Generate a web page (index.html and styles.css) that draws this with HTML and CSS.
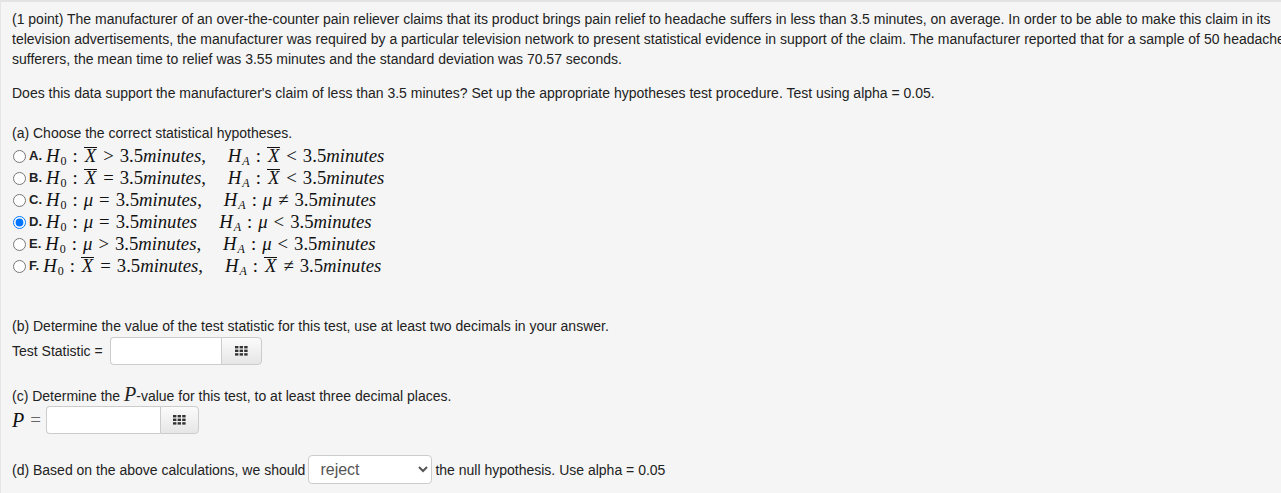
FILE: index.html
```html
<!DOCTYPE html>
<html>
<head>
<meta charset="utf-8">
<link rel="stylesheet" href="styles.css">
</head>
<body>
<div class="problem">
  <p class="intro">(1 point) The manufacturer of an over-the-counter pain reliever claims that its product brings pain relief to headache suffers in less than 3.5 minutes, on average. In order to be able to make this claim in its television advertisements, the manufacturer was required by a particular television network to present statistical evidence in support of the claim. The manufacturer reported that for a sample of 50 headache sufferers, the mean time to relief was 3.55 minutes and the standard deviation was 70.57 seconds.</p>
  <p class="question">Does this data support the manufacturer's claim of less than 3.5 minutes? Set up the appropriate hypotheses test procedure. Test using alpha = 0.05.</p>

  <p class="part-a">(a) Choose the correct statistical hypotheses.</p>
  <div class="choices">
    <label class="choice"><input type="radio" name="h"><b class="letter">A.</b> <span class="math"><i>H</i><sub>0</sub><span class="op">:</span><i class="bar">X</i><span class="op">&gt;</span>3.5<i>minutes</i>,<span class="quad"></span><i>H</i><sub><i>A</i></sub><span class="op">:</span><i class="bar">X</i><span class="op">&lt;</span>3.5<i>minutes</i></span></label>
    <label class="choice"><input type="radio" name="h"><b class="letter">B.</b> <span class="math"><i>H</i><sub>0</sub><span class="op">:</span><i class="bar">X</i><span class="op">=</span>3.5<i>minutes</i>,<span class="quad"></span><i>H</i><sub><i>A</i></sub><span class="op">:</span><i class="bar">X</i><span class="op">&lt;</span>3.5<i>minutes</i></span></label>
    <label class="choice"><input type="radio" name="h"><b class="letter">C.</b> <span class="math"><i>H</i><sub>0</sub><span class="op">:</span><i>μ</i><span class="op">=</span>3.5<i>minutes</i>,<span class="quad"></span><i>H</i><sub><i>A</i></sub><span class="op">:</span><i>μ</i><span class="op">≠</span>3.5<i>minutes</i></span></label>
    <label class="choice"><input type="radio" name="h" checked><b class="letter">D.</b> <span class="math"><i>H</i><sub>0</sub><span class="op">:</span><i>μ</i><span class="op">=</span>3.5<i>minutes</i><span class="quad"></span><i>H</i><sub><i>A</i></sub><span class="op">:</span><i>μ</i><span class="op">&lt;</span>3.5<i>minutes</i></span></label>
    <label class="choice"><input type="radio" name="h"><b class="letter">E.</b> <span class="math"><i>H</i><sub>0</sub><span class="op">:</span><i>μ</i><span class="op">&gt;</span>3.5<i>minutes</i>,<span class="quad"></span><i>H</i><sub><i>A</i></sub><span class="op">:</span><i>μ</i><span class="op">&lt;</span>3.5<i>minutes</i></span></label>
    <label class="choice"><input type="radio" name="h"><b class="letter">F.</b> <span class="math"><i>H</i><sub>0</sub><span class="op">:</span><i class="bar">X</i><span class="op">=</span>3.5<i>minutes</i>,<span class="quad"></span><i>H</i><sub><i>A</i></sub><span class="op">:</span><i class="bar">X</i><span class="op">≠</span>3.5<i>minutes</i></span></label>
  </div>

  <p class="part-b">(b) Determine the value of the test statistic for this test, use at least two decimals in your answer.</p>
  <div class="answer-row">
    <span class="label">Test Statistic =</span>
    <div class="input-group stat">
      <input type="text" class="ans">
      <span class="kbd-btn"><svg width="13" height="10" viewBox="0 0 13 10"><g fill="#333"><rect x="0" y="0" width="3.4" height="2.4"/><rect x="4.6" y="0" width="3.4" height="2.4"/><rect x="9.2" y="0" width="3.4" height="2.4"/><rect x="0" y="3.6" width="3.4" height="2.4"/><rect x="4.6" y="3.6" width="3.4" height="2.4"/><rect x="9.2" y="3.6" width="3.4" height="2.4"/><rect x="0" y="7.2" width="3.4" height="2.4"/><rect x="4.6" y="7.2" width="3.4" height="2.4"/><rect x="9.2" y="7.2" width="3.4" height="2.4"/></g></svg></span>
    </div>
  </div>

  <p class="part-c">(c) Determine the <i class="mathP">P</i>-value for this test, to at least three decimal places.</p>
  <div class="answer-row p-row">
    <span class="math plabel"><i class="pbig">P</i><span class="eq">=</span></span>
    <div class="input-group pval">
      <input type="text" class="ans">
      <span class="kbd-btn"><svg width="13" height="10" viewBox="0 0 13 10"><g fill="#333"><rect x="0" y="0" width="3.4" height="2.4"/><rect x="4.6" y="0" width="3.4" height="2.4"/><rect x="9.2" y="0" width="3.4" height="2.4"/><rect x="0" y="3.6" width="3.4" height="2.4"/><rect x="4.6" y="3.6" width="3.4" height="2.4"/><rect x="9.2" y="3.6" width="3.4" height="2.4"/><rect x="0" y="7.2" width="3.4" height="2.4"/><rect x="4.6" y="7.2" width="3.4" height="2.4"/><rect x="9.2" y="7.2" width="3.4" height="2.4"/></g></svg></span>
    </div>
  </div>

  <div class="answer-row d-row">
    <span class="label">(d) Based on the above calculations, we should</span>
    <select class="sel"><option>reject</option><option>fail to reject</option></select>
    <span class="label">the null hypothesis. Use alpha = 0.05</span>
  </div>
</div>
</body>
</html>
```
FILE: styles.css
```css
html, body {
  margin: 0;
  padding: 0;
  overflow: hidden;
  background: #f5f5f5;
}
.problem {
  box-sizing: border-box;
  width: 1310px;
  height: 493px;
  background: #f5f5f5;
  border-top: 2px solid #e3e3e3;
  border-left: 1px solid #e6e6e6;
  padding: 7px 10px 0 11px;
  font-family: "Liberation Sans", Arial, sans-serif;
  font-size: 14px;
  line-height: 20px;
  color: #222;
}
p { margin: 0; }
.intro { margin-bottom: 14px; }
.question { margin-bottom: 20px; }
.part-a { margin-bottom: 2px; }
.choices {
  display: flex;
  flex-direction: column;
}
.choice {
  display: flex;
  align-items: center;
  height: 22px;
  white-space: nowrap;
}
.choice input {
  margin: 0 3px 0 1px;
  width: 13px;
  height: 13px;
}
.letter {
  font-weight: bold;
  font-size: 13px;
  margin-right: 4px;
}
.math {
  font-family: "Liberation Serif", "Times New Roman", serif;
  font-size: 18.7px;
  color: #111;
}
.math i { font-style: italic; }
.math sub {
  font-size: 12px;
  vertical-align: -3px;
  line-height: 0;
  margin-left: 1px;
}
.op { margin: 0 6px; }
.quad { display: inline-block; width: 22px; }
.bar {
  display: inline-block;
  border-top: 1px solid #111;
  line-height: 15px;
  padding: 0 1px;
}
.part-b { margin-top: 39px; }
.answer-row {
  display: flex;
  align-items: center;
  height: 28px;
  margin-top: 1px;
}
.answer-row .label { margin-right: 7px; }
.input-group {
  display: flex;
  height: 28px;
}
.ans {
  box-sizing: border-box;
  height: 28px;
  border: 1px solid #ccc;
  border-right: none;
  border-radius: 4px 0 0 4px;
  background: #fff;
  padding: 0 6px;
  font-size: 14px;
  outline: none;
}
.stat .ans { width: 111px; }
.pval .ans { width: 114px; }
.kbd-btn {
  box-sizing: border-box;
  width: 41px;
  height: 28px;
  display: flex;
  align-items: center;
  justify-content: center;
  border: 1px solid #ccc;
  border-radius: 0 4px 4px 0;
  background: linear-gradient(#fbfbfb, #e6e6e6);
}
.pval .kbd-btn { width: 39px; }
.part-c { margin-top: 19px; }
.mathP {
  font-family: "Liberation Serif", "Times New Roman", serif;
  font-size: 20px;
}
.p-row { margin-top: 0; }
.plabel { display: flex; align-items: center; margin-right: 5px; }
.pbig { font-size: 20px; }
.eq { margin-left: 6px; color: #666; font-size: 19px; }
.d-row { margin-top: 21px; height: 29px; }
.d-row .label { margin-right: 3px; }
.sel {
  box-sizing: border-box;
  width: 124px;
  height: 29px;
  border: 1px solid #ccc;
  border-radius: 4px;
  background: #fff;
  color: #555;
  font-family: "Liberation Sans", Arial, sans-serif;
  font-size: 16px;
  padding: 0 7px;
  margin-right: 3px;
}
```
